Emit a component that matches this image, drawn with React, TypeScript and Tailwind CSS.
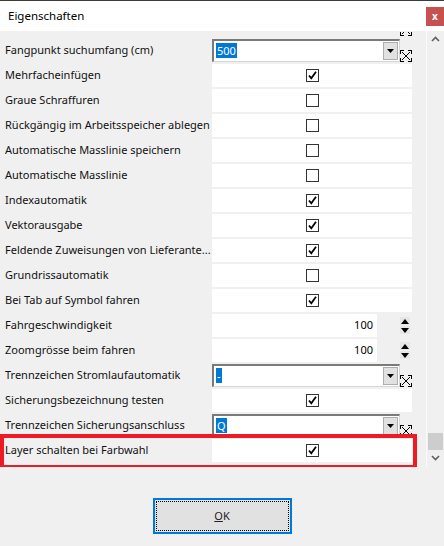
import React from 'react'

type Row =
  | { label: string; kind: 'check'; checked: boolean }
  | { label: string; kind: 'combo'; value: string }
  | { label: string; kind: 'spin'; value: string }

const ROWS: Row[] = [
  { label: 'Fangpunkt suchumfang (cm)', kind: 'combo', value: '500' },
  { label: 'Mehrfacheinfügen', kind: 'check', checked: true },
  { label: 'Graue Schraffuren', kind: 'check', checked: false },
  { label: 'Rückgängig im Arbeitsspeicher ablegen', kind: 'check', checked: false },
  { label: 'Automatische Masslinie speichern', kind: 'check', checked: false },
  { label: 'Automatische Masslinie', kind: 'check', checked: false },
  { label: 'Indexautomatik', kind: 'check', checked: true },
  { label: 'Vektorausgabe', kind: 'check', checked: true },
  { label: 'Feldende Zuweisungen von Lieferante...', kind: 'check', checked: true },
  { label: 'Grundrissautomatik', kind: 'check', checked: false },
  { label: 'Bei Tab auf Symbol fahren', kind: 'check', checked: true },
  { label: 'Fahrgeschwindigkeit', kind: 'spin', value: '100' },
  { label: 'Zoomgrösse beim fahren', kind: 'spin', value: '100' },
  { label: 'Trennzeichen Stromlaufautomatik', kind: 'combo', value: '-' },
  { label: 'Sicherungsbezeichnung testen', kind: 'check', checked: true },
  { label: 'Trennzeichen Sicherungsanschluss', kind: 'combo', value: 'Q' },
  { label: 'Layer schalten bei Farbwahl', kind: 'check', checked: true },
]

function ResizeIcon() {
  return (
    <svg width="12" height="12" viewBox="0 0 12 12" shapeRendering="crispEdges" className="shrink-0">
      <path d="M2 2 L10 10 M10 2 L2 10" stroke="#000" strokeWidth="1" fill="none" />
      <path d="M0 0h4v1H1v3H0z M12 0H8v1h3v3h1z M0 12h4v-1H1V8H0z M12 12H8v-1h3V8h1z" fill="#000" />
    </svg>
  )
}

function Check({ checked }: { checked: boolean }) {
  return (
    <div className="w-[13px] h-[13px] border border-[#333] bg-white flex items-center justify-center">
      {checked && (
        <svg width="11" height="11" viewBox="0 0 11 11">
          <path d="M2 5.5 L4.3 8.3 L9 1.8" stroke="#000" strokeWidth="1.8" fill="none" />
        </svg>
      )}
    </div>
  )
}

function Combo({ value }: { value: string }) {
  return (
    <div className="flex items-start">
      <div className="w-[188px] h-[23px] bg-white border-t-2 border-l-2 border-[#7a7a7a] border-r border-b border-r-[#d6d6d6] border-b-[#d6d6d6] flex items-center pl-[2px] pr-[1px]">
        <span className="flex-1">
          <span className="bg-[#0078d7] text-white px-[1px] leading-[15px] inline-block">{value}</span>
        </span>
        <div className="w-[15px] h-[18px] bg-[#e1e1e1] border border-[#adadad] flex items-center justify-center">
          <svg width="7" height="4" viewBox="0 0 7 4"><path d="M0 0h7L3.5 4z" fill="#000" /></svg>
        </div>
      </div>
      <div className="mt-[11px]"><ResizeIcon /></div>
    </div>
  )
}

function Spin({ value }: { value: string }) {
  return (
    <div className="flex items-start w-[200px]">
      <div className="w-[165px] h-[23px] bg-white flex items-center justify-end pr-[4px] text-black">{value}</div>
      <div className="ml-[23px] mt-[3px] w-[10px] flex flex-col gap-[1px]">
        <div className="h-[8px] bg-[#e6e6e6] flex items-center justify-center">
          <svg width="8" height="5" viewBox="0 0 8 5"><path d="M0 5h8L4 0z" fill="#000" /></svg>
        </div>
        <div className="h-[8px] bg-[#e6e6e6] flex items-center justify-center">
          <svg width="8" height="5" viewBox="0 0 8 5"><path d="M0 0h8L4 5z" fill="#000" /></svg>
        </div>
      </div>
    </div>
  )
}

function PropRow({ row, highlight }: { row: Row; highlight?: boolean }) {
  return (
    <div className="relative h-[25px] shrink-0 flex items-center">
      <div className="w-[212px] pl-[5px] text-[#111] whitespace-nowrap overflow-hidden">{row.label}</div>
      <div className="w-[200px] h-[25px] flex items-center">
        {row.kind === 'check' && (
          <div className="w-[200px] h-[23px] bg-white flex items-center justify-center">
            <Check checked={row.checked} />
          </div>
        )}
        {row.kind === 'combo' && <Combo value={row.value} />}
        {row.kind === 'spin' && <Spin value={row.value} />}
      </div>
      {highlight && (
        <div className="absolute left-0 top-[-4px] w-[417px] h-[35px] border-4 border-[#ed1c24]" />
      )}
    </div>
  )
}

export default function App() {
  return (
    <div className="w-[444px] h-[546px] bg-[#f0f0f0] flex flex-col text-[11px] overflow-hidden" style={{ fontFamily: '"Noto Sans", "Liberation Sans", sans-serif' }}>
      <div className="h-[1px] shrink-0 bg-[#3a3a3a]" />
      <div className="h-[30px] shrink-0 bg-white flex items-center justify-between pl-[8px]">
        <span className="text-[11.5px] text-black">Eigenschaften</span>
        <div className="w-[18px] h-[19px] bg-[#c75050] flex items-center justify-center text-white text-[10px] font-bold leading-none">x</div>
      </div>

      <div className="flex h-[436px] shrink-0">
        <div className="w-[426px] flex flex-col overflow-hidden">
          <div className="h-[7px] shrink-0 overflow-hidden flex items-start pl-[400px]">
            <div className="mt-[1px] h-[4px] overflow-hidden flex items-end"><ResizeIcon /></div>
          </div>
          {ROWS.map((row, i) => (
            <PropRow key={row.label} row={row} highlight={i === ROWS.length - 1} />
          ))}
          <div className="mt-[23px] ml-[212px] w-[200px] h-[1px] shrink-0 bg-white" />
        </div>
        <div className="w-[18px] border-l border-[#fafafa] flex flex-col items-center pt-[5px]">
          <svg width="9" height="6" viewBox="0 0 9 6"><path d="M1 5 L4.5 1.5 L8 5" stroke="#606060" strokeWidth="1.6" fill="none" /></svg>
          <div className="flex-1" />
          <div className="w-[15px] h-[17px] bg-[#cdcdcd] mb-[5px]" />
          <svg width="9" height="6" viewBox="0 0 9 6" className="mb-[6px]"><path d="M1 1 L4.5 4.5 L8 1" stroke="#606060" strokeWidth="1.6" fill="none" /></svg>
        </div>
      </div>

      <div className="flex-1 flex justify-center pt-[31px]">
        <div className="w-[139px] h-[36px] border-2 border-[#0078d7] bg-[#e1e1e1] p-[1px]">
          <div className="w-full h-full border border-dotted border-black flex items-center justify-center text-[#222]">
            <span><span className="underline">O</span>K</span>
          </div>
        </div>
      </div>
    </div>
  )
}
